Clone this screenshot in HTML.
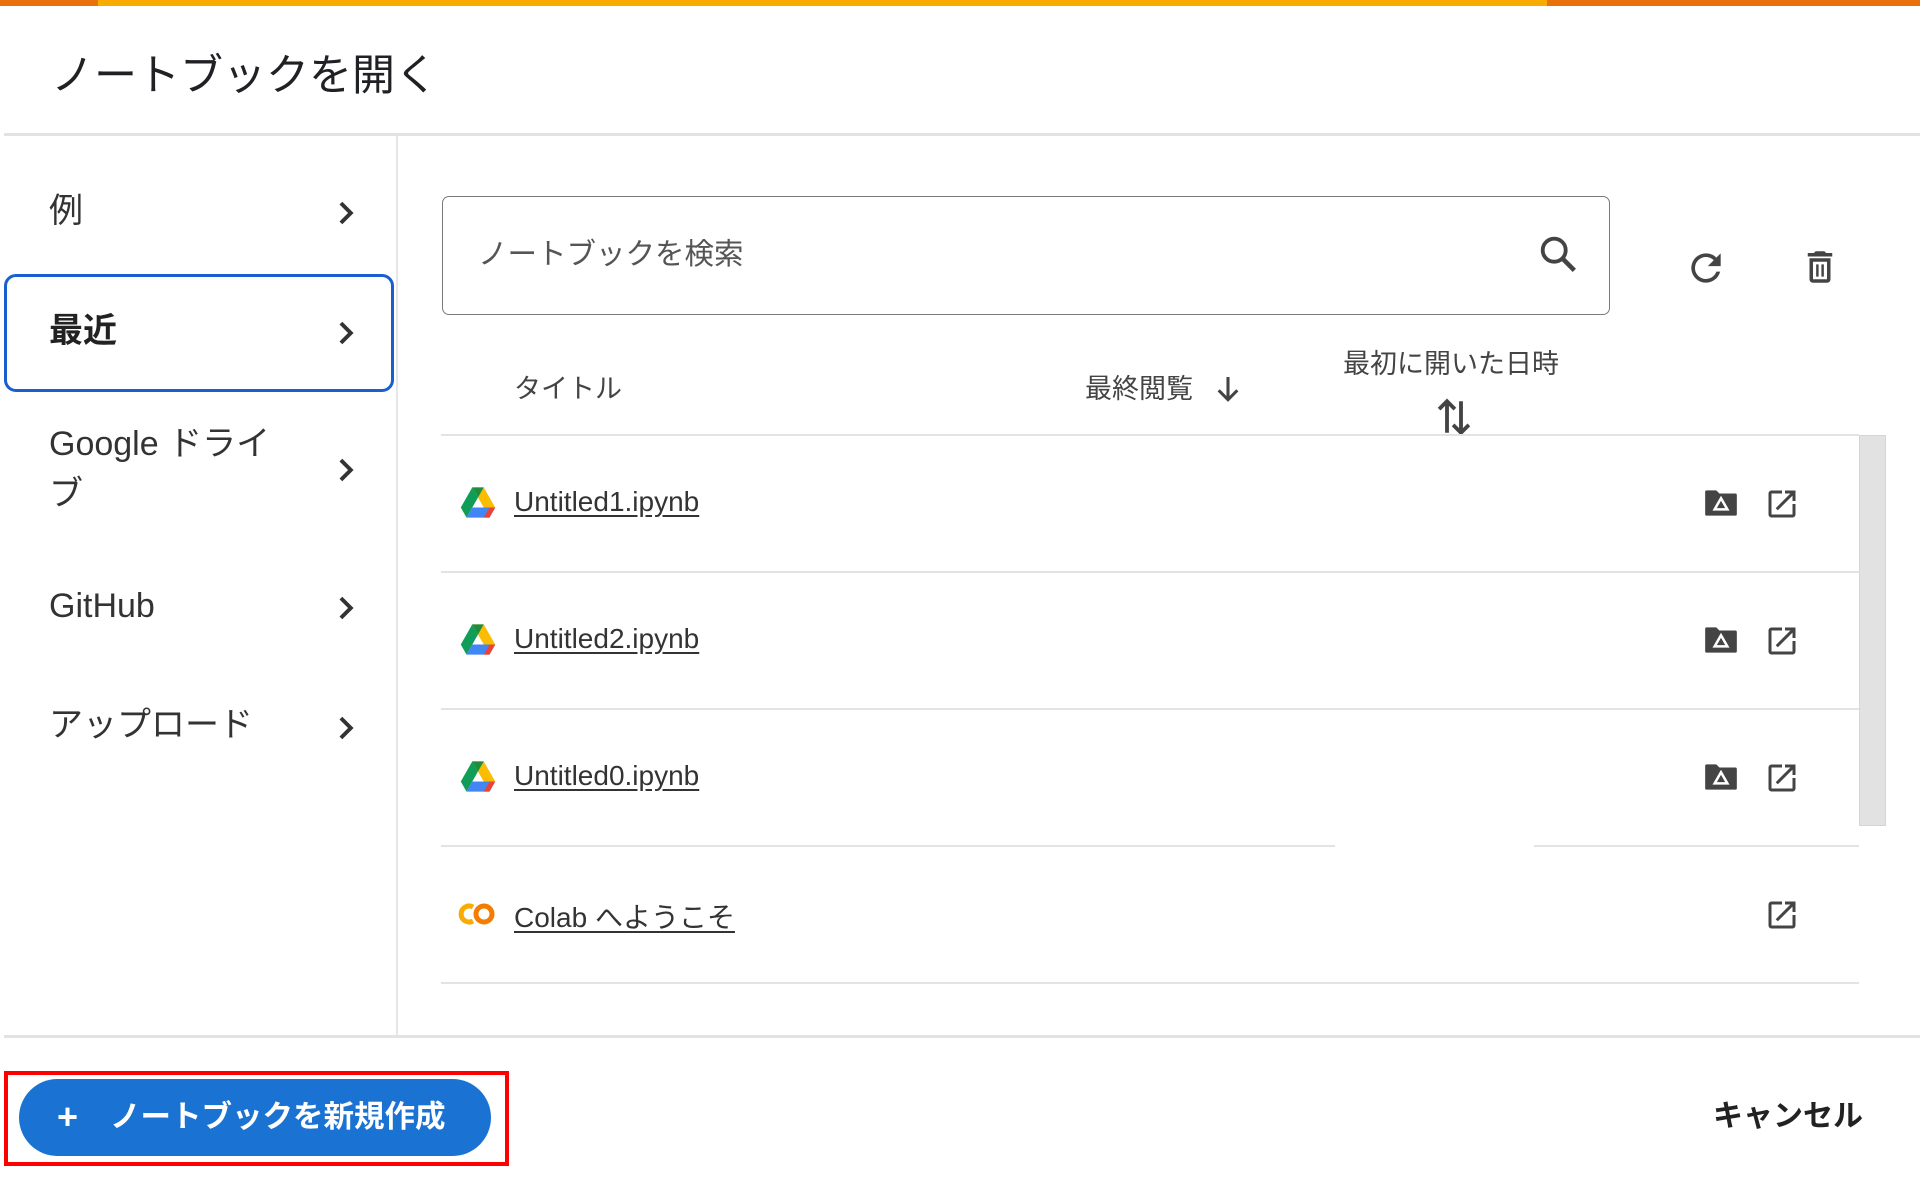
<!DOCTYPE html>
<html><head><meta charset="utf-8">
<style>
*{margin:0;padding:0;box-sizing:border-box}
body{width:1920px;height:1182px;background:#fff;position:relative;overflow:hidden;font-family:"Liberation Sans","Noto Sans CJK JP",sans-serif;color:#333}
.a{position:absolute;white-space:nowrap}
.hl{position:absolute;background:#e3e3e3}
.chev{position:absolute;width:36px;height:36px}
.lnk{position:absolute;font-size:28px;color:#333;text-decoration:underline;text-underline-offset:4px;line-height:1}
</style></head><body>
<div class="a" style="left:0;top:0;width:98px;height:6px;background:#e8710a"></div>
<div class="a" style="left:98px;top:0;width:1449px;height:6px;background:#f9ab00"></div>
<div class="a" style="left:1547px;top:0;width:373px;height:6px;background:#e8710a"></div>

<div class="a" style="left:51px;top:52px;font-size:43px;line-height:48px;color:#202124">ノートブックを開く</div>
<div class="hl" style="left:4px;top:133px;width:1916px;height:3px"></div>
<div class="hl" style="left:396px;top:136px;width:2px;height:900px;background:#e6e6e6"></div>
<div class="hl" style="left:4px;top:1035px;width:1916px;height:3px"></div>

<!-- sidebar -->
<div class="a" style="left:49px;top:191px;font-size:34px;line-height:40px;color:#333">例</div>
<div class="a" style="left:4px;top:274px;width:390px;height:118px;border:3px solid #1a5fd0;border-radius:12px"></div>
<div class="a" style="left:49px;top:311px;font-size:34px;line-height:40px;font-weight:bold;color:#222">最近</div>
<div class="a" style="left:49px;top:419px;font-size:34px;line-height:50px;color:#333">Google ドライ<br>ブ</div>
<div class="a" style="left:49px;top:586px;font-size:34px;line-height:40px;color:#333">GitHub</div>
<div class="a" style="left:49px;top:705px;font-size:34px;line-height:40px;color:#333">アップロード</div>
<svg class="chev" style="left:328px;top:195px" viewBox="0 0 24 24"><path d="M8.6 5.4 15.2 12l-6.6 6.6" fill="none" stroke="#333" stroke-width="2.6"/></svg>
<svg class="chev" style="left:328px;top:315px" viewBox="0 0 24 24"><path d="M8.6 5.4 15.2 12l-6.6 6.6" fill="none" stroke="#333" stroke-width="2.6"/></svg>
<svg class="chev" style="left:328px;top:452px" viewBox="0 0 24 24"><path d="M8.6 5.4 15.2 12l-6.6 6.6" fill="none" stroke="#333" stroke-width="2.6"/></svg>
<svg class="chev" style="left:328px;top:590px" viewBox="0 0 24 24"><path d="M8.6 5.4 15.2 12l-6.6 6.6" fill="none" stroke="#333" stroke-width="2.6"/></svg>
<svg class="chev" style="left:328px;top:710px" viewBox="0 0 24 24"><path d="M8.6 5.4 15.2 12l-6.6 6.6" fill="none" stroke="#333" stroke-width="2.6"/></svg>

<!-- search -->
<div class="a" style="left:442px;top:196px;width:1168px;height:119px;border:1.5px solid #7a7a7a;border-radius:7px"></div>
<div class="a" style="left:478px;top:237px;font-size:29.5px;line-height:36px;color:#555">ノートブックを検索</div>
<svg class="a" style="left:1536px;top:232px;width:46px;height:46px" viewBox="0 0 24 24"><circle cx="9.5" cy="9.5" r="6" fill="none" stroke="#444" stroke-width="2"/><path d="M14 14l6 6" stroke="#444" stroke-width="2.4"/></svg>
<svg class="a" style="left:1684px;top:246px;width:44px;height:44px" viewBox="0 0 24 24"><path d="M17.65 6.35A7.96 7.96 0 0 0 12 4a8 8 0 1 0 7.73 10h-2.08A6 6 0 1 1 12 6c1.66 0 3.14.69 4.22 1.78L13 11h7V4z" fill="#444"/></svg>
<svg class="a" style="left:1799px;top:245px;width:42px;height:44px" viewBox="0 0 24 24"><path d="M6 19c0 1.1.9 2 2 2h8c1.1 0 2-.9 2-2V7H6zM8 9h8v10H8zm7.5-5-1-1h-5l-1 1H5v2h14V4z" fill="#444"/><path d="M10.5 10.5v7M13.5 10.5v7" stroke="#444" stroke-width="1.4"/></svg>

<!-- column headers -->
<div class="a" style="left:514px;top:372px;font-size:27px;line-height:34px;color:#444">タイトル</div>
<div class="a" style="left:1085px;top:372px;font-size:27px;line-height:34px;color:#444">最終閲覧</div>
<svg class="a" style="left:1212px;top:372px;width:32px;height:34px" viewBox="0 0 24 24"><path d="M12 3v17M5 13l7 7 7-7" fill="none" stroke="#444" stroke-width="2.3"/></svg>
<div class="a" style="left:1343px;top:347px;font-size:27px;line-height:34px;color:#444">最初に開いた日時</div>
<svg class="a" style="left:1436px;top:396px;width:36px;height:42px" viewBox="0 0 20 24"><path d="M6 21V3M1.5 7.5 6 3l4.5 4.5M14 3v18M9.5 16.5 14 21l4.5-4.5" fill="none" stroke="#444" stroke-width="2.2"/></svg>
<div class="hl" style="left:441px;top:434px;width:1418px;height:2px"></div>
<div class="a" style="left:1859px;top:435px;width:27px;height:391px;background:#e2e2e2;border:1px solid #d5d5d5"></div>

<div class="hl" style="left:441px;top:571px;width:1418px;height:2px"></div>
<div class="hl" style="left:441px;top:708px;width:1418px;height:2px"></div>
<div class="hl" style="left:441px;top:845px;width:894px;height:2px"></div>
<div class="hl" style="left:1534px;top:845px;width:325px;height:2px"></div>
<div class="hl" style="left:441px;top:982px;width:1418px;height:2px"></div>

<svg width="0" height="0" style="position:absolute"><defs>
<g id="drv"><path d="M8 1h8l8 14h-8z" fill="#fbbc04"/><path d="M8 1 0 15l4 7 8-14z" fill="#0f9d58"/><path d="M4 22h16l4-7H8z" fill="#4285f4"/><path d="M24 15l-4 7h-4l4-7z" fill="#ea4335"/><path d="M8 1l4 7 4-7z" fill="#1e8e3e"/></g>
<g id="fold"><path d="M2 5a1 1 0 0 1 1-1h6l2 2h10a1 1 0 0 1 1 1v12a1 1 0 0 1-1 1H3a1 1 0 0 1-1-1z" fill="#444"/><path d="M12 9l4 7h-8z" fill="none" stroke="#fff" stroke-width="1.6"/></g>
<g id="open"><path d="M19 19H5V5h7V3H5a2 2 0 0 0-2 2v14a2 2 0 0 0 2 2h14a2 2 0 0 0 2-2v-7h-2zM14 3v2h3.6l-9.8 9.8 1.4 1.4L19 6.4V10h2V3z" fill="#444"/></g>
</defs></svg>

<svg class="a" style="left:460px;top:486px;width:36px;height:33px" viewBox="0 0 24 23"><use href="#drv"/></svg>
<div class="lnk" style="left:514px;top:488px">Untitled1.ipynb</div>
<svg class="a" style="left:1702px;top:484px;width:38px;height:38px" viewBox="0 0 24 24"><use href="#fold"/></svg>
<svg class="a" style="left:1764px;top:486px;width:36px;height:36px" viewBox="0 0 24 24"><use href="#open"/></svg>

<svg class="a" style="left:460px;top:623px;width:36px;height:33px" viewBox="0 0 24 23"><use href="#drv"/></svg>
<div class="lnk" style="left:514px;top:625px">Untitled2.ipynb</div>
<svg class="a" style="left:1702px;top:621px;width:38px;height:38px" viewBox="0 0 24 24"><use href="#fold"/></svg>
<svg class="a" style="left:1764px;top:623px;width:36px;height:36px" viewBox="0 0 24 24"><use href="#open"/></svg>

<svg class="a" style="left:460px;top:760px;width:36px;height:33px" viewBox="0 0 24 23"><use href="#drv"/></svg>
<div class="lnk" style="left:514px;top:762px">Untitled0.ipynb</div>
<svg class="a" style="left:1702px;top:758px;width:38px;height:38px" viewBox="0 0 24 24"><use href="#fold"/></svg>
<svg class="a" style="left:1764px;top:760px;width:36px;height:36px" viewBox="0 0 24 24"><use href="#open"/></svg>

<svg class="a" style="left:457px;top:901px;width:40px;height:26px" viewBox="0 0 40 26"><path d="M16 6a8 8 0 1 0 0 14" fill="none" stroke="#f9ab00" stroke-width="5"/><circle cx="27" cy="13" r="8" fill="none" stroke="#f57c00" stroke-width="5"/></svg>
<div class="lnk" style="left:514px;top:904px">Colab へようこそ</div>
<svg class="a" style="left:1764px;top:897px;width:36px;height:36px" viewBox="0 0 24 24"><use href="#open"/></svg>

<!-- footer -->
<div class="a" style="left:4px;top:1071px;width:505px;height:95px;border:4px solid #ff0000"></div>
<div class="a" style="left:19px;top:1079px;width:472px;height:77px;border-radius:39px;background:#1a73d2"></div>
<div class="a" style="left:57px;top:1097px;font-size:36px;line-height:40px;font-weight:bold;color:#fff">+</div>
<div class="a" style="left:110px;top:1099px;font-size:30.5px;line-height:36px;font-weight:bold;color:#fff">ノートブックを新規作成</div>
<div class="a" style="left:1713px;top:1099px;font-size:30px;line-height:36px;font-weight:bold;color:#222">キャンセル</div>
</body></html>
